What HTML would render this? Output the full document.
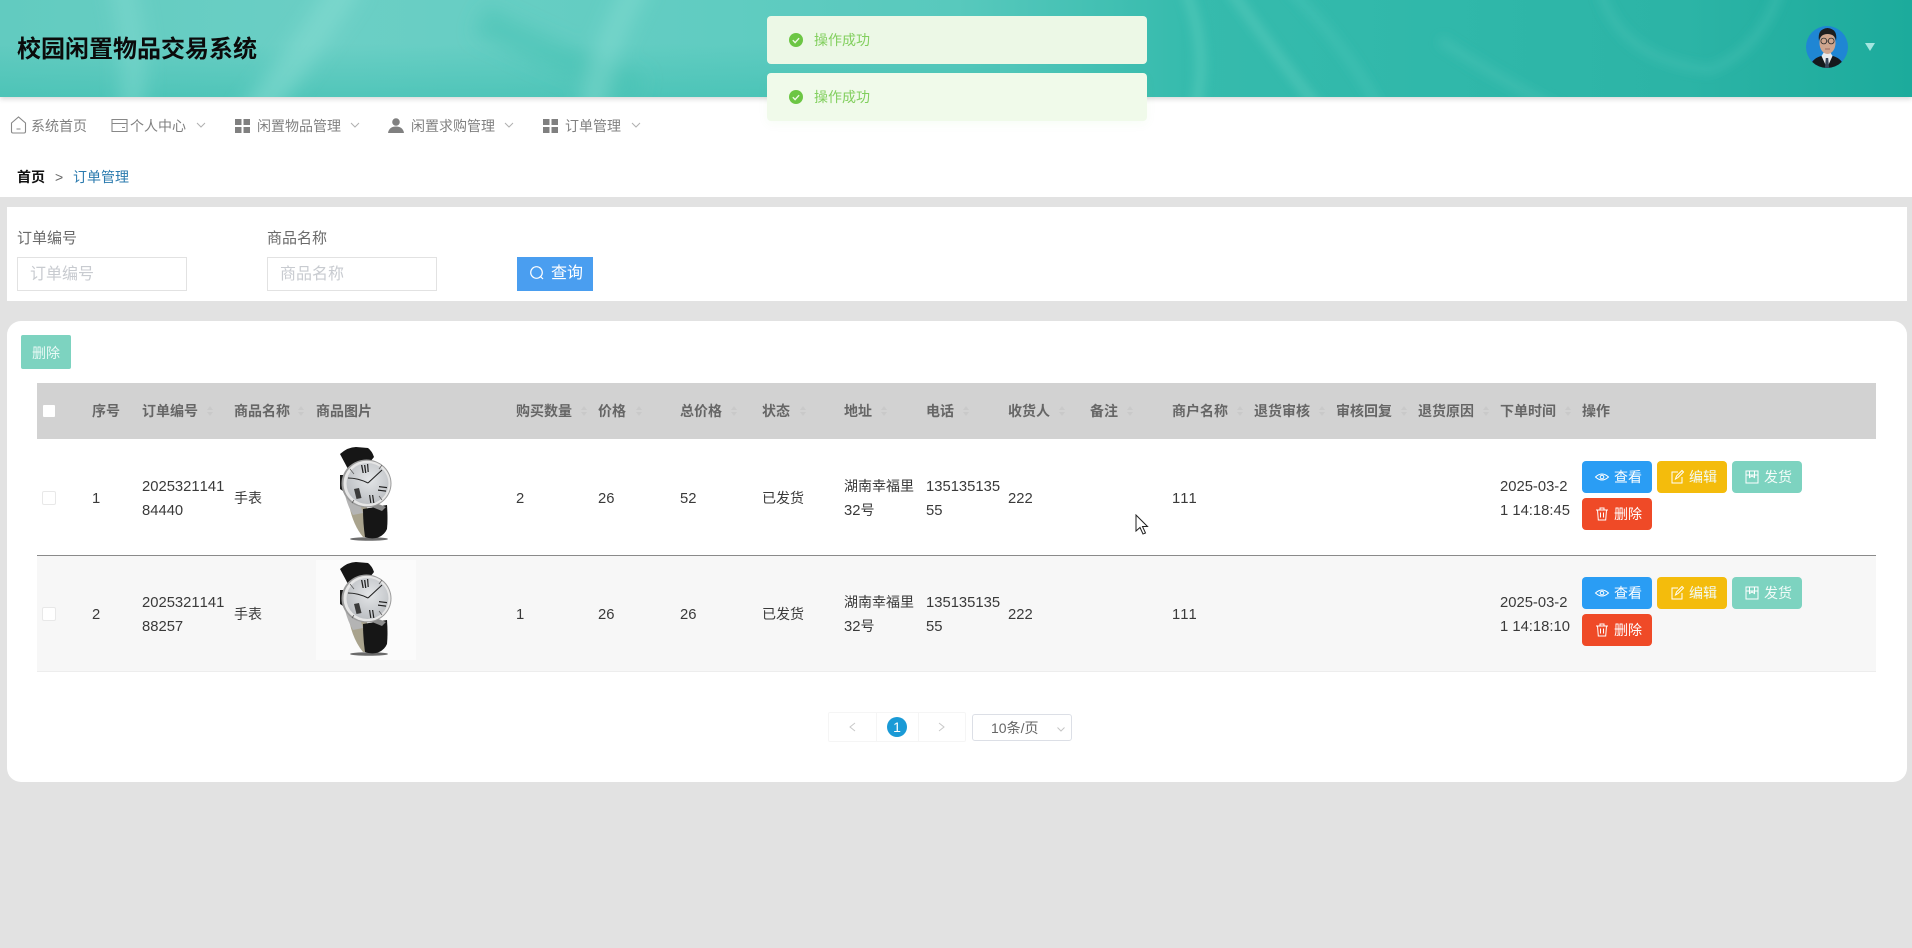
<!DOCTYPE html>
<html lang="zh-CN"><head><meta charset="utf-8"><title>订单管理</title>
<style>
html,body{margin:0;padding:0;width:1912px;height:948px;overflow:hidden;background:#e2e2e2;font-family:"Liberation Sans","Noto Sans CJK SC",sans-serif;font-size:14px;color:#333;font-kerning:none}
div,span,svg{position:absolute;box-sizing:border-box}
.t{white-space:nowrap;line-height:24px}
.n{color:#808080;top:114px}
.h{top:399px;font-weight:bold;color:#666}
.c{color:#3a3a3a}
.d{font-size:14.8px;margin-top:1px}
.a{position:static;font-size:14.800px}
.b{width:70px;height:32px;border-radius:4px;color:#fff}
.b span{left:32px;top:4px;line-height:24px;white-space:nowrap}
.b svg{left:12px;top:8px;width:16px;height:16px;fill:none;stroke:#fff;stroke-width:1}
.bl{background:#2a9df4}.ye{background:#f4bc0c}.te{background:#7dd3c0}.re{background:#ef4a27}
.te span,.ye span{color:#f2fbf8}
.s{width:6px;height:14px;top:404px}
.s:before,.s:after{content:"";position:absolute;left:0;border-left:3px solid transparent;border-right:3px solid transparent}
.s:before{top:2px;border-bottom:4px solid #c9c9c9}
.s:after{top:8px;border-top:4px solid #c9c9c9}
.cb{left:42px;width:14px;height:14px;background:#fff;border:1px solid #e8e8e8;border-radius:2px}
.toast{left:767px;width:380px;height:48px;border-radius:4px;background:#ecf8e6}
.toast span{left:47px;top:12px;line-height:24px;color:#82cf5e;white-space:nowrap}
.toast svg{left:22px;top:17px;width:14px;height:14px}
.cv{width:10px;height:6px;top:122px;fill:none;stroke:#b0b0b0;stroke-width:1}
.g{width:15px;height:14px;top:119px;fill:#808080}
.inp{top:257px;width:170px;height:34px;background:#fff;border:1px solid #e2e2e2;color:#c8cbd0;font-size:16px;line-height:33px;padding-left:12px;white-space:nowrap}
.w{left:316px;width:100px;height:100px;background:#fff}
</style></head><body>
<svg width="0" height="0" style="position:absolute"><defs>
<radialGradient id="dl" cx="55%" cy="40%" r="65%"><stop offset="0" stop-color="#e4e6e8"/><stop offset="1" stop-color="#b9bcc0"/></radialGradient>
<filter id="soft" x="-10%" y="-10%" width="120%" height="120%"><feGaussianBlur stdDeviation=".35"/></filter>
<g id="watch"><g filter="url(#soft)">
<ellipse cx="53" cy="94" rx="19" ry="1.800" fill="#2e2e2e" opacity=".7"/>
<path d="M33 60 Q37 80 47 92 L51 92 L51 62Z" fill="#a9a38d"/>
<path d="M47 64 L71 60 Q72 74 71 84 Q68 91 60 93 Q54 94 49 92 Q47 78 47 64Z" fill="#131313"/>
<path d="M24 9 Q32 2 40 2 L52 3 Q56 6 58 12 L50 22 L32 24 Z" fill="#131313"/>
<path d="M29 50 Q32 62 37 70 L47 68 L42 52Z" fill="#b4b4b4"/>
<path d="M60 58 L70 62 L66 66 L56 62Z" fill="#8d8d8d"/>
<path d="M24 30 L27 30 L27 46 L24 44Z" fill="#1d1d1d"/>
<ellipse cx="50.500" cy="38.500" rx="25" ry="24" fill="#9b9b9b"/>
<ellipse cx="51" cy="38.500" rx="23.500" ry="22.800" fill="#e6e6e6"/>
<ellipse cx="51.500" cy="38.500" rx="21" ry="20.500" fill="url(#dl)"/>
<path d="M32 33 Q42 33 52 38 M52 38 L66 25" stroke="#222" stroke-width="1.100" fill="none"/>
<path d="M45 20h1.300l1.500 8h-1.300zM48 20h1.300l1.100 8h-1.300zM51 19h1.200l.6 8h-1.200z" fill="#222"/>
<path d="M63 41l8 1v1.200l-8-1zM62 44.500l8 1v1.200l-8-1z" fill="#222"/>
<path d="M53 50l1.200 0 1.200 8-1.200 0zM56 50l1.200 0 1.200 8-1.200 0z" fill="#222"/>
<path d="M38 44l5-1 2.500 10-5 1z" fill="#3a3a3a"/>
<path d="M34 24l4 5M36 58l2-3M66 55l-3-4M66 20l-3 4" stroke="#555" stroke-width=".7"/>
</g></g>
<g id="ck"><circle cx="7" cy="7" r="7" fill="#6cc644"/><path d="M3.800 7.200l2.300 2.400 4-4.400" stroke="#eef9e7" stroke-width="1.400" fill="none"/></g>
<g id="eye"><path d="M1.500 8Q8 2 14.500 8 8 14 1.500 8Z"/><circle cx="8" cy="8" r="1.800"/></g>
<g id="ed"><path d="M13 8v6H3V3h6M6.500 10l1-3L13 1.500l1.500 1.500L9 8.500z"/></g>
<g id="sh"><path d="M2 2h12v12H2zM2 6h12M5.500 2v6.500L8 7l2.500 1.500V2"/></g>
<g id="tr"><path d="M2 4h12M6 4V2h4v2M3.500 4l.8 10h7.400l.8-10M6.500 6.500v5M9.500 6.500v5"/></g>
<filter id="bl" filterUnits="userSpaceOnUse" x="-60" y="-60" width="2032" height="217"><feGaussianBlur stdDeviation="9"/></filter>
<filter id="bl2" filterUnits="userSpaceOnUse" x="-60" y="-60" width="2032" height="217"><feGaussianBlur stdDeviation="5"/></filter>
</defs></svg>

<!-- top white strip -->
<div style="left:0;top:0;width:1912px;height:197px;background:#fff"></div>

<!-- header -->
<div style="left:0;top:0;width:1912px;height:97px;overflow:hidden;box-shadow:0 2px 5px rgba(0,0,0,.16);background:linear-gradient(90deg,#62cbc0 0%,#6bcfc5 18%,#60ccc1 38%,#58c9bd 50%,#36bbad 62%,#30b8aa 75%,#2cb4a6 88%,#1cab9c 100%)">
<div style="left:0;top:0;width:1000px;height:97px;background:linear-gradient(180deg,rgba(60,190,176,0) 45%,rgba(60,190,176,.55) 100%)"></div>
<svg width="1912" height="97" viewBox="0 0 1912 97" style="left:0;top:0">
<g filter="url(#bl)" fill="none">
<path d="M120 -20Q140 50 130 120" stroke="#82d9cf" stroke-width="26" opacity=".5"/>
<path d="M350 -20Q300 60 250 120" stroke="#84dad0" stroke-width="30" opacity=".6"/>
<path d="M480 20Q560 60 640 90" stroke="#48c2b5" stroke-width="30" opacity=".55"/>
<path d="M640 -20Q600 50 590 120" stroke="#86dbd1" stroke-width="24" opacity=".5"/>
</g>
<g filter="url(#bl2)" fill="none">
<path d="M1185 -10Q1210 50 1195 110" stroke="#5ed0bf" stroke-width="9" opacity=".55"/>
<path d="M1230 -10Q1280 60 1320 110" stroke="#5fcdc0" stroke-width="9" opacity=".55"/>
<path d="M1290 -10Q1350 50 1380 110" stroke="#4fc7ba" stroke-width="8" opacity=".45"/>
<path d="M1600 -10Q1620 60 1710 70Q1760 50 1780 -10" stroke="#55c9bc" stroke-width="7" opacity=".4"/>
<path d="M1440 40Q1500 80 1560 110" stroke="#4ec6b9" stroke-width="9" opacity=".45"/>
</g>
</svg>
</div>
<div class="t" style="left:17px;top:35px;font-size:24px;line-height:30px;font-weight:bold;color:#0b0b0b">校园闲置物品交易系统</div>

<!-- avatar -->
<svg width="42" height="42" viewBox="0 0 42 42" style="left:1806px;top:26px">
<defs><clipPath id="av"><circle cx="21" cy="21" r="21"/></clipPath></defs>
<g clip-path="url(#av)">
<rect width="42" height="42" fill="#1f86d4"/>
<path d="M4 42Q5 33 15 30L27 30Q37 33 38 42Z" fill="#15191c"/>
<path d="M15.500 30L21 42L26.500 30L24 26H18Z" fill="#e8eaec"/>
<path d="M19.800 32h2.400l.9 10h-4.200z" fill="#39465a"/>
<ellipse cx="21.500" cy="17" rx="8" ry="11" fill="#cfa58e"/>
<path d="M13 15Q11 3 21.500 2Q32 3 30 15Q29 8 21.500 8Q14.500 8 13 15Z" fill="#1d1d1f"/>
<circle cx="17.800" cy="15" r="2.900" fill="none" stroke="#2a2a2a" stroke-width=".8"/>
<circle cx="25.200" cy="15" r="2.900" fill="none" stroke="#2a2a2a" stroke-width=".8"/>
<path d="M20.700 15h1.600" stroke="#2a2a2a" stroke-width=".8"/>
<path d="M19 23h5" stroke="#8a5a50" stroke-width=".8"/>
</g></svg>
<svg width="10" height="8" viewBox="0 0 10 8" style="left:1865px;top:43px"><path d="M0 0H10L5 8Z" fill="#a4e6e0"/></svg>

<!-- nav -->
<svg width="17" height="18" viewBox="0 0 17 18" style="left:10px;top:116px"><path d="M1.500 7L8.500 1L15.500 7V15.500Q15.500 17 14 17H3Q1.500 17 1.500 15.500Z M6.500 13h4" fill="none" stroke="#888" stroke-width="1.100"/></svg>
<div class="t n" style="left:31px">系统首页</div>
<svg width="17" height="15" viewBox="0 0 17 15" style="left:111px;top:118px"><path d="M1 1.500h15v12H1zM1 5.500h15M11 9.500h3" fill="none" stroke="#888" stroke-width="1.100"/></svg>
<div class="t n" style="left:130px">个人中心</div>
<svg class="cv" viewBox="0 0 10 6" style="left:196px"><path d="M1 1l4 4 4-4"/></svg>
<svg class="g" viewBox="0 0 15 14" style="left:235px"><rect width="6.500" height="6"/><rect x="8.500" width="6.500" height="6"/><rect y="8" width="6.500" height="6"/><rect x="8.500" y="8" width="6.500" height="6"/></svg>
<div class="t n" style="left:257px">闲置物品管理</div>
<svg class="cv" viewBox="0 0 10 6" style="left:350px"><path d="M1 1l4 4 4-4"/></svg>
<svg width="16" height="15" viewBox="0 0 16 15" style="left:388px;top:118px"><circle cx="8" cy="4" r="3.800" fill="#808080"/><path d="M0 15Q1 8.500 8 8.500T16 15Z" fill="#808080"/></svg>
<div class="t n" style="left:411px">闲置求购管理</div>
<svg class="cv" viewBox="0 0 10 6" style="left:504px"><path d="M1 1l4 4 4-4"/></svg>
<svg class="g" viewBox="0 0 15 14" style="left:543px"><rect width="6.500" height="6"/><rect x="8.500" width="6.500" height="6"/><rect y="8" width="6.500" height="6"/><rect x="8.500" y="8" width="6.500" height="6"/></svg>
<div class="t n" style="left:565px">订单管理</div>
<svg class="cv" viewBox="0 0 10 6" style="left:631px"><path d="M1 1l4 4 4-4"/></svg>

<!-- breadcrumb -->
<div class="t" style="left:17px;top:165px;color:#111;font-weight:bold">首页</div>
<div class="t" style="left:55px;top:165px;color:#666">&gt;</div>
<div class="t" style="left:73px;top:165px;color:#2a7aae">订单管理</div>

<!-- search card -->
<div style="left:7px;top:207px;width:1900px;height:94px;background:#fff"></div>
<div class="t" style="left:17px;top:227px;font-size:15px;color:#6a6a6a">订单编号</div>
<div class="t" style="left:267px;top:227px;font-size:15px;color:#6a6a6a">商品名称</div>
<div class="inp" style="left:17px">订单编号</div>
<div class="inp" style="left:267px">商品名称</div>
<div style="left:517px;top:257px;width:76px;height:34px;background:#4a9ef0;color:#fff;font-size:16px;line-height:33px;padding-left:34px">查询</div>
<svg width="16" height="16" viewBox="0 0 16 16" style="left:529px;top:265px"><circle cx="7.500" cy="7.500" r="5.800" fill="none" stroke="#fff" stroke-width="1.200"/><path d="M11.500 11.500l2.500 2.500" stroke="#fff" stroke-width="1.200"/></svg>

<!-- table card -->
<div style="left:7px;top:321px;width:1900px;height:461px;background:#fff;border-radius:14px"></div>
<div style="left:21px;top:335px;width:50px;height:34px;background:#7dd3c0;border-radius:2px;color:#eafaf6;line-height:36px;text-align:center">删除</div>

<div style="left:37px;top:383px;width:1839px;height:56px;background:#d2d2d2"></div>
<div style="left:37px;top:555px;width:1839px;height:1px;background:#8a8a8a"></div>
<div style="left:37px;top:556px;width:1839px;height:116px;background:#f7f7f7;border-bottom:1px solid #ededed"></div>

<div class="cb" style="top:404px;border-color:#d2d2d2"></div>
<div class="t h" style="left:92px">序号</div>
<div class="t h" style="left:142px">订单编号</div><span class="s" style="left:207px"></span>
<div class="t h" style="left:234px">商品名称</div><span class="s" style="left:298px"></span>
<div class="t h" style="left:316px">商品图片</div>
<div class="t h" style="left:516px">购买数量</div><span class="s" style="left:581px"></span>
<div class="t h" style="left:598px">价格</div><span class="s" style="left:636px"></span>
<div class="t h" style="left:680px">总价格</div><span class="s" style="left:731px"></span>
<div class="t h" style="left:762px">状态</div><span class="s" style="left:800px"></span>
<div class="t h" style="left:844px">地址</div><span class="s" style="left:881px"></span>
<div class="t h" style="left:926px">电话</div><span class="s" style="left:963px"></span>
<div class="t h" style="left:1008px">收货人</div><span class="s" style="left:1059px"></span>
<div class="t h" style="left:1090px">备注</div><span class="s" style="left:1127px"></span>
<div class="t h" style="left:1172px">商户名称</div><span class="s" style="left:1237px"></span>
<div class="t h" style="left:1254px">退货审核</div><span class="s" style="left:1319px"></span>
<div class="t h" style="left:1336px">审核回复</div><span class="s" style="left:1401px"></span>
<div class="t h" style="left:1418px">退货原因</div><span class="s" style="left:1483px"></span>
<div class="t h" style="left:1500px">下单时间</div><span class="s" style="left:1565px"></span>
<div class="t h" style="left:1582px">操作</div>

<!-- row 1 -->
<div class="cb" style="top:491px"></div>
<div class="t c d" style="left:92px;top:486px">1</div>
<div class="t c d" style="left:142px;top:474px">2025321141<br>84440</div>
<div class="t c" style="left:234px;top:486px">手表</div>
<div class="w" style="top:445px"><svg width="100" height="100" viewBox="0 0 100 100" style="left:0;top:0"><use href="#watch"/></svg></div>
<div class="t c d" style="left:516px;top:486px">2</div>
<div class="t c d" style="left:598px;top:486px">26</div>
<div class="t c d" style="left:680px;top:486px">52</div>
<div class="t c" style="left:762px;top:486px">已发货</div>
<div class="t c" style="left:844px;top:474px">湖南幸福里<br><span class="a">32</span>号</div>
<div class="t c d" style="left:926px;top:474px">135135135<br>55</div>
<div class="t c d" style="left:1008px;top:486px">222</div>
<div class="t c d" style="left:1172px;top:486px">111</div>
<div class="t c d" style="left:1500px;top:474px">2025-03-2<br>1 14:18:45</div>
<div class="b bl" style="left:1582px;top:461px"><svg viewBox="0 0 16 16"><use href="#eye"/></svg><span>查看</span></div>
<div class="b ye" style="left:1657px;top:461px"><svg viewBox="0 0 16 16"><use href="#ed"/></svg><span>编辑</span></div>
<div class="b te" style="left:1732px;top:461px"><svg viewBox="0 0 16 16"><use href="#sh"/></svg><span>发货</span></div>
<div class="b re" style="left:1582px;top:498px"><svg viewBox="0 0 16 16"><use href="#tr"/></svg><span>删除</span></div>

<!-- row 2 -->
<div class="cb" style="top:607px"></div>
<div class="t c d" style="left:92px;top:602px">2</div>
<div class="t c d" style="left:142px;top:590px">2025321141<br>88257</div>
<div class="t c" style="left:234px;top:602px">手表</div>
<div class="w" style="top:560px;background:#fbfbfb"><svg width="100" height="100" viewBox="0 0 100 100" style="left:0;top:0"><use href="#watch"/></svg></div>
<div class="t c d" style="left:516px;top:602px">1</div>
<div class="t c d" style="left:598px;top:602px">26</div>
<div class="t c d" style="left:680px;top:602px">26</div>
<div class="t c" style="left:762px;top:602px">已发货</div>
<div class="t c" style="left:844px;top:590px">湖南幸福里<br><span class="a">32</span>号</div>
<div class="t c d" style="left:926px;top:590px">135135135<br>55</div>
<div class="t c d" style="left:1008px;top:602px">222</div>
<div class="t c d" style="left:1172px;top:602px">111</div>
<div class="t c d" style="left:1500px;top:590px">2025-03-2<br>1 14:18:10</div>
<div class="b bl" style="left:1582px;top:577px"><svg viewBox="0 0 16 16"><use href="#eye"/></svg><span>查看</span></div>
<div class="b ye" style="left:1657px;top:577px"><svg viewBox="0 0 16 16"><use href="#ed"/></svg><span>编辑</span></div>
<div class="b te" style="left:1732px;top:577px"><svg viewBox="0 0 16 16"><use href="#sh"/></svg><span>发货</span></div>
<div class="b re" style="left:1582px;top:614px"><svg viewBox="0 0 16 16"><use href="#tr"/></svg><span>删除</span></div>

<!-- pagination -->
<div style="left:828px;top:712px;width:138px;height:30px;border:1px solid #f5f5f5;border-radius:2px"></div>
<div style="left:876px;top:712px;width:1px;height:30px;background:#f5f5f5"></div>
<div style="left:918px;top:712px;width:1px;height:30px;background:#f5f5f5"></div>
<svg width="10" height="10" viewBox="0 0 10 10" style="left:848px;top:722px"><path d="M7 1L2 5l5 4" fill="none" stroke="#c8c8c8"/></svg>
<svg width="10" height="10" viewBox="0 0 10 10" style="left:937px;top:722px"><path d="M2 1l5 4-5 4" fill="none" stroke="#c8c8c8"/></svg>
<div style="left:887px;top:717px;width:20px;height:20px;border-radius:50%;background:#1a9ad6;color:#fff;font-size:14px;line-height:20px;text-align:center">1</div>
<div style="left:972px;top:714px;width:100px;height:27px;border:1px solid #dcdfe6;border-radius:3px;color:#666;line-height:26px;padding-left:18px;white-space:nowrap">10条/页</div>
<svg width="8" height="5" viewBox="0 0 8 5" style="left:1057px;top:727px"><path d="M.5.500L4 4 7.500.500" fill="none" stroke="#c4c4c4"/></svg>

<!-- toasts -->
<div class="toast" style="top:16px"><svg viewBox="0 0 14 14"><use href="#ck"/></svg><span>操作成功</span></div>
<div class="toast" style="top:73px;background:#f0faea;box-shadow:0 3px 10px rgba(120,200,100,.06)"><svg viewBox="0 0 14 14"><use href="#ck"/></svg><span>操作成功</span></div>

<!-- cursor -->
<svg width="14" height="22" viewBox="0 0 14 22" style="left:1135px;top:514px"><path d="M1 1V17L5 13.500 8 20 10.500 19 7.500 12.500H12.500Z" fill="#fff" stroke="#222" stroke-width="1"/></svg>
</body></html>
